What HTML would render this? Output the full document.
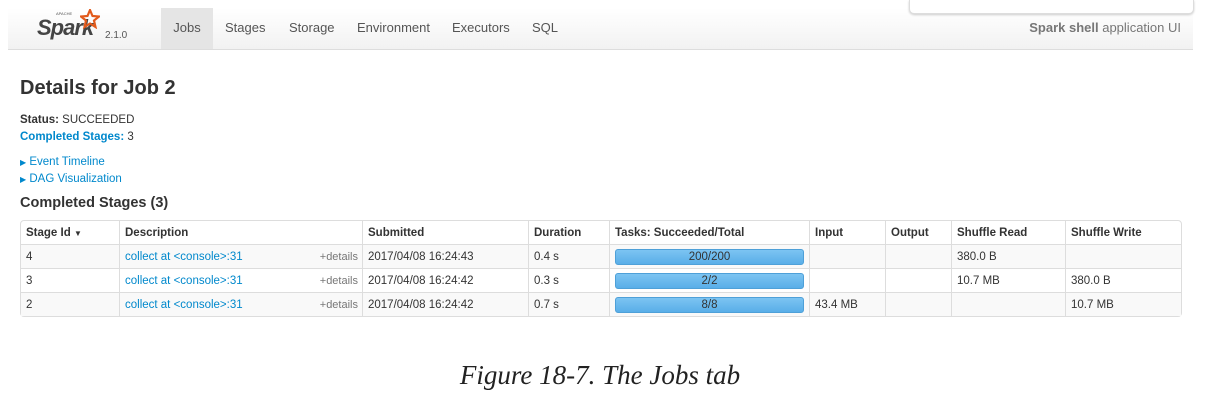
<!DOCTYPE html>
<html><head><style>
body{margin:0;width:1206px;height:404px;background:#fff;font-family:"Liberation Sans",sans-serif;color:#333;position:relative;overflow:hidden}
.nav{position:absolute;left:8px;top:8px;width:1185px;height:41px;background:linear-gradient(#fff,#f2f2f2);border-bottom:1px solid #ddd}
.t{position:absolute;white-space:nowrap}
.tab{position:absolute;top:8px;height:41px;line-height:40px;font-size:13px;color:#555}
a{color:#0088cc;text-decoration:none}
table{position:absolute;left:20px;top:220px;width:1162px;table-layout:fixed;border-collapse:separate;border-spacing:0;border:1px solid #ddd;border-radius:4px;font-size:11.5px}
td,th{height:23px;padding:0 5px;text-align:left;border-left:1px solid #ddd;border-top:1px solid #ddd;white-space:nowrap;overflow:hidden}
th{border-top:none;font-weight:bold}
td:first-child,th:first-child{border-left:none}
tr.s td{background:#f9f9f9}
.bar{height:16px;border-radius:3px;background:linear-gradient(#7cc4f2,#59aee8);border:1px solid #4ea0d8;text-align:center;line-height:15px;color:#333;box-sizing:border-box}
.det{float:right;color:#777;font-size:11px;margin-right:-1px}
</style></head><body>
<div class="nav"></div>
<div style="position:absolute;left:909px;top:0;width:283px;height:13px;border:1px solid #ddd;border-top:none;border-radius:0 0 5px 5px;background:#fff;box-shadow:0 1px 2px #ccc"></div>
<div class="t" style="left:37px;top:15px;font-size:22px;font-style:italic;font-weight:bold;color:#444;letter-spacing:-1px">Spark</div>
<svg style="position:absolute;left:80px;top:9px" width="20" height="20" viewBox="0 0 20 20"><path d="M10 1 L12.5 7 L19 7.5 L14 11.5 L15.5 18 L10 14.5 L4.5 18 L6 11.5 L1 7.5 L7.5 7 Z" fill="none" stroke="#e25a1c" stroke-width="2.2"/></svg>
<div class="t" style="left:56px;top:11px;font-size:4px;color:#555">APACHE</div>
<div class="t" style="left:105px;top:30px;font-size:10px;color:#555">2.1.0</div>
<div class="tab" style="left:161px;width:52px;background:#e5e5e5;text-align:center">Jobs</div>
<div class="tab" style="left:225px">Stages</div>
<div class="tab" style="left:289px">Storage</div>
<div class="tab" style="left:357px">Environment</div>
<div class="tab" style="left:452px">Executors</div>
<div class="tab" style="left:532px">SQL</div>
<div class="t" style="right:25px;top:20px;font-size:13px;color:#777"><b>Spark shell</b> application UI</div>
<div class="t" style="left:20px;top:77px;font-size:20px;font-weight:bold">Details for Job 2</div>
<div class="t" style="left:20px;top:114px;font-size:11.5px"><b>Status:</b> SUCCEEDED</div>
<div class="t" style="left:20px;top:131px;font-size:11.5px"><a href="#"><b>Completed Stages:</b></a> 3</div>
<div class="t" style="left:20px;top:156px;font-size:11.5px"><a href="#"><span style="font-size:8px;color:#0088cc">&#9654;</span> Event Timeline</a></div>
<div class="t" style="left:20px;top:173px;font-size:11.5px"><a href="#"><span style="font-size:8px;color:#0088cc">&#9654;</span> DAG Visualization</a></div>
<div class="t" style="left:20px;top:195px;font-size:14.5px;font-weight:bold">Completed Stages (3)</div>
<table>
<colgroup><col style="width:98px"><col style="width:243px"><col style="width:166px"><col style="width:81px"><col style="width:200px"><col style="width:76px"><col style="width:66px"><col style="width:114px"><col></colgroup>
<tr><th>Stage Id <span style="font-size:8px">&#9660;</span></th><th>Description</th><th>Submitted</th><th>Duration</th><th>Tasks: Succeeded/Total</th><th>Input</th><th>Output</th><th>Shuffle Read</th><th>Shuffle Write</th></tr>
<tr class="s"><td>4</td><td><a href="#">collect at &lt;console&gt;:31</a><span class="det">+details</span></td><td>2017/04/08 16:24:43</td><td>0.4 s</td><td><div class="bar">200/200</div></td><td></td><td></td><td>380.0 B</td><td></td></tr>
<tr><td>3</td><td><a href="#">collect at &lt;console&gt;:31</a><span class="det">+details</span></td><td>2017/04/08 16:24:42</td><td>0.3 s</td><td><div class="bar">2/2</div></td><td></td><td></td><td>10.7 MB</td><td>380.0 B</td></tr>
<tr class="s"><td>2</td><td><a href="#">collect at &lt;console&gt;:31</a><span class="det">+details</span></td><td>2017/04/08 16:24:42</td><td>0.7 s</td><td><div class="bar">8/8</div></td><td>43.4 MB</td><td></td><td></td><td>10.7 MB</td></tr>
</table>
<div class="t" style="left:0;width:1200px;text-align:center;top:360px;font-family:'Liberation Serif',serif;font-style:italic;font-size:27px;color:#222">Figure 18-7. The Jobs tab</div>
</body></html>
